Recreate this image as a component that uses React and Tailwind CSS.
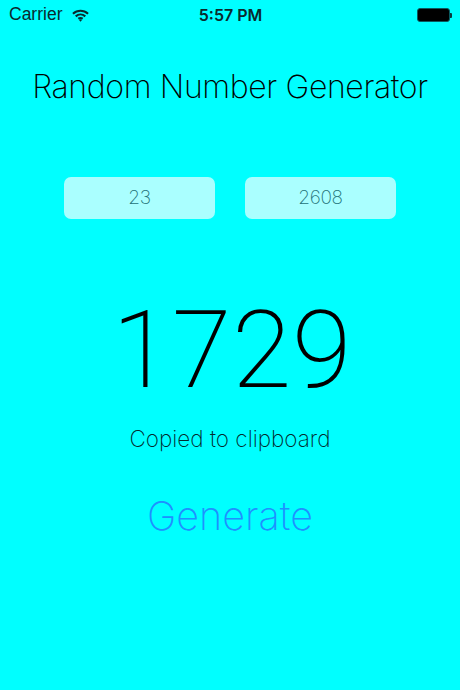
export default function App() {
  return (
    <div className="w-[460px] h-[690px] bg-[#00ffff] flex flex-col items-center overflow-hidden text-black font-['Inter',sans-serif]">
      <div className="w-full h-[30px] shrink-0 flex items-center justify-between pl-[9px] pr-[8px] text-[#0a2a2e]" >
        <div className="flex items-center gap-[10px] w-[120px]">
          <span className="text-[17.5px] font-['Liberation_Sans',sans-serif] leading-none">Carrier</span>
          <svg width="17" height="13" viewBox="0 0 18 13" fill="none" stroke="currentColor" strokeWidth="2.2" strokeLinecap="butt">
            <path d="M1 4.6C5.6.4 12.4.4 17 4.6" />
            <path d="M3.9 7.4c3-2.6 7.2-2.6 10.2 0" />
            <path d="M6.6 9.9c1.5-1 3.3-1 4.8 0" />
            <path d="M9 13l-1.8-2.1c1.1-.7 2.5-.7 3.6 0z" fill="currentColor" stroke="none" />
          </svg>
        </div>
        <span className="text-[16px] font-semibold leading-none">5:57 PM</span>
        <div className="w-[120px] flex justify-end items-center">
          <div className="w-[33px] h-[14px] bg-black border border-[#0a5a60] rounded-[3px]" />
          <div className="w-[2px] h-[5px] bg-[#0a3a40] rounded-r-[1px]" />
        </div>
      </div>
      <h1 className="mt-[37px] text-[32px] leading-[40px] font-extralight tracking-[-0.37px] whitespace-nowrap">Random Number Generator</h1>
      <div className="mt-[70px] flex gap-[30px]">
        <div className="w-[151px] h-[42px] rounded-[7px] bg-[#aaffff] flex items-center justify-center text-[19px] font-extralight text-[#1f7278] tracking-[-0.3px]">23</div>
        <div className="w-[151px] h-[42px] rounded-[7px] bg-[#aaffff] flex items-center justify-center text-[19px] font-extralight text-[#1f7278] tracking-[-0.3px]">2608</div>
      </div>
      <div className="mt-[71px] pl-[4px] text-[108px] leading-[120px] font-extralight font-['Roboto',sans-serif] tracking-[0.6px]">1729</div>
      <div className="mt-[14px] text-[22.5px] leading-[30px] font-extralight text-[#042a2e]">Copied to clipboard</div>
      <div className="mt-[37px] text-[39.5px] leading-[50px] font-extralight text-[#1e90ff]">Generate</div>
    </div>
  );
}
